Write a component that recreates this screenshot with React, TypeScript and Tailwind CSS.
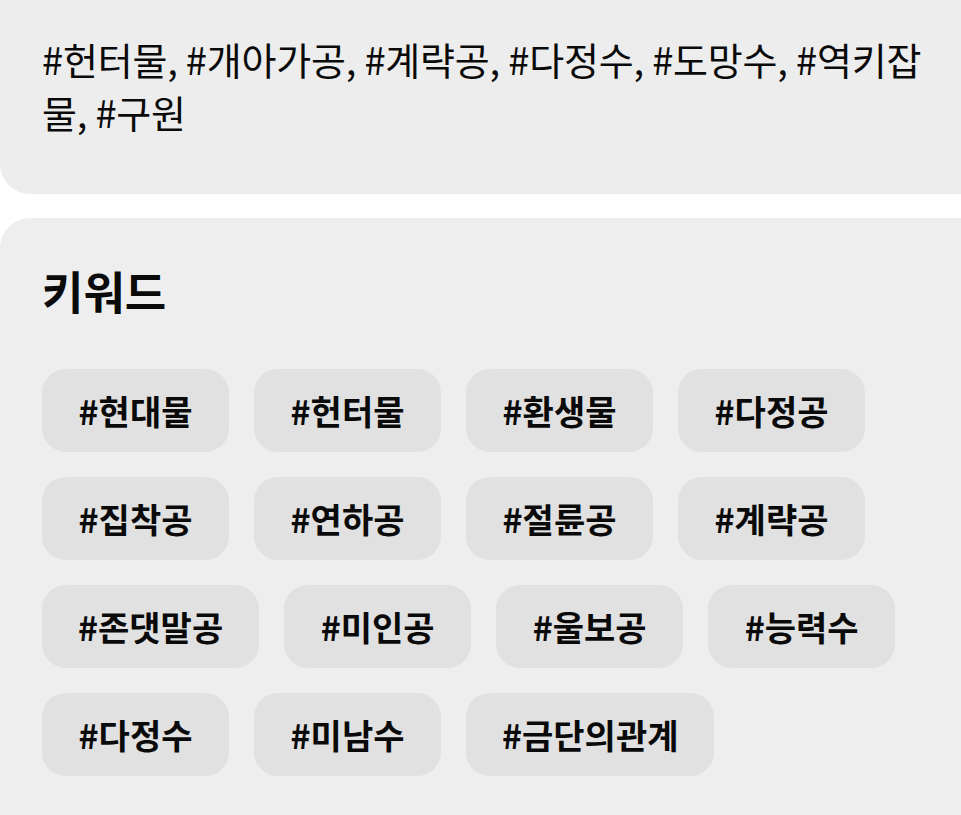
import React from "react";

const tags = [
  "#현대물",
  "#헌터물",
  "#환생물",
  "#다정공",
  "#집착공",
  "#연하공",
  "#절륜공",
  "#계략공",
  "#존댓말공",
  "#미인공",
  "#울보공",
  "#능력수",
  "#다정수",
  "#미남수",
  "#금단의관계",
];

const font = { fontFamily: '"Noto Sans CJK KR", "Noto Sans", sans-serif' };

export default function App() {
  return (
    <div className="min-h-[815px] w-[961px] overflow-hidden bg-white text-[#0a0a0a]" style={font}>
      {/* genre tags summary */}
      <section className="rounded-bl-[30px] bg-[#ededed] pb-[56px] pl-[42px] pr-[36px] pt-[32px]">
        <p className="text-[38px] leading-[53px] tracking-[-0.2px]">
          #헌터물, #개아가공, #계략공, #다정수, #도망수, #역키잡물, #구원
        </p>
      </section>

      {/* keyword chips */}
      <section className="mt-[24px] min-h-[600px] rounded-tl-[30px] bg-[#eeeeee] pl-[42px] pr-[20px] pt-[46px]">
        <h2 className="text-[45px] font-bold leading-[54px]">키워드</h2>
        <div className="mt-[51px] grid grid-cols-[repeat(4,max-content)] gap-[25px]">
          {tags.slice(0, 8).map((t) => (
            <Chip key={t} label={t} />
          ))}
        </div>
        <div className="mt-[25px] flex flex-wrap gap-[25px]">
          {tags.slice(8, 12).map((t) => (
            <Chip key={t} label={t} />
          ))}
        </div>
        <div className="mt-[25px] flex flex-wrap gap-[25px]">
          {tags.slice(12).map((t) => (
            <Chip key={t} label={t} />
          ))}
        </div>
      </section>
    </div>
  );
}

function Chip({ label }: { label: string }) {
  return (
    <span className="flex h-[83px] min-w-[187px] items-center justify-center rounded-[24px] bg-[#e1e1e1] px-[36px] text-[34px] font-bold leading-none">
      {label}
    </span>
  );
}
